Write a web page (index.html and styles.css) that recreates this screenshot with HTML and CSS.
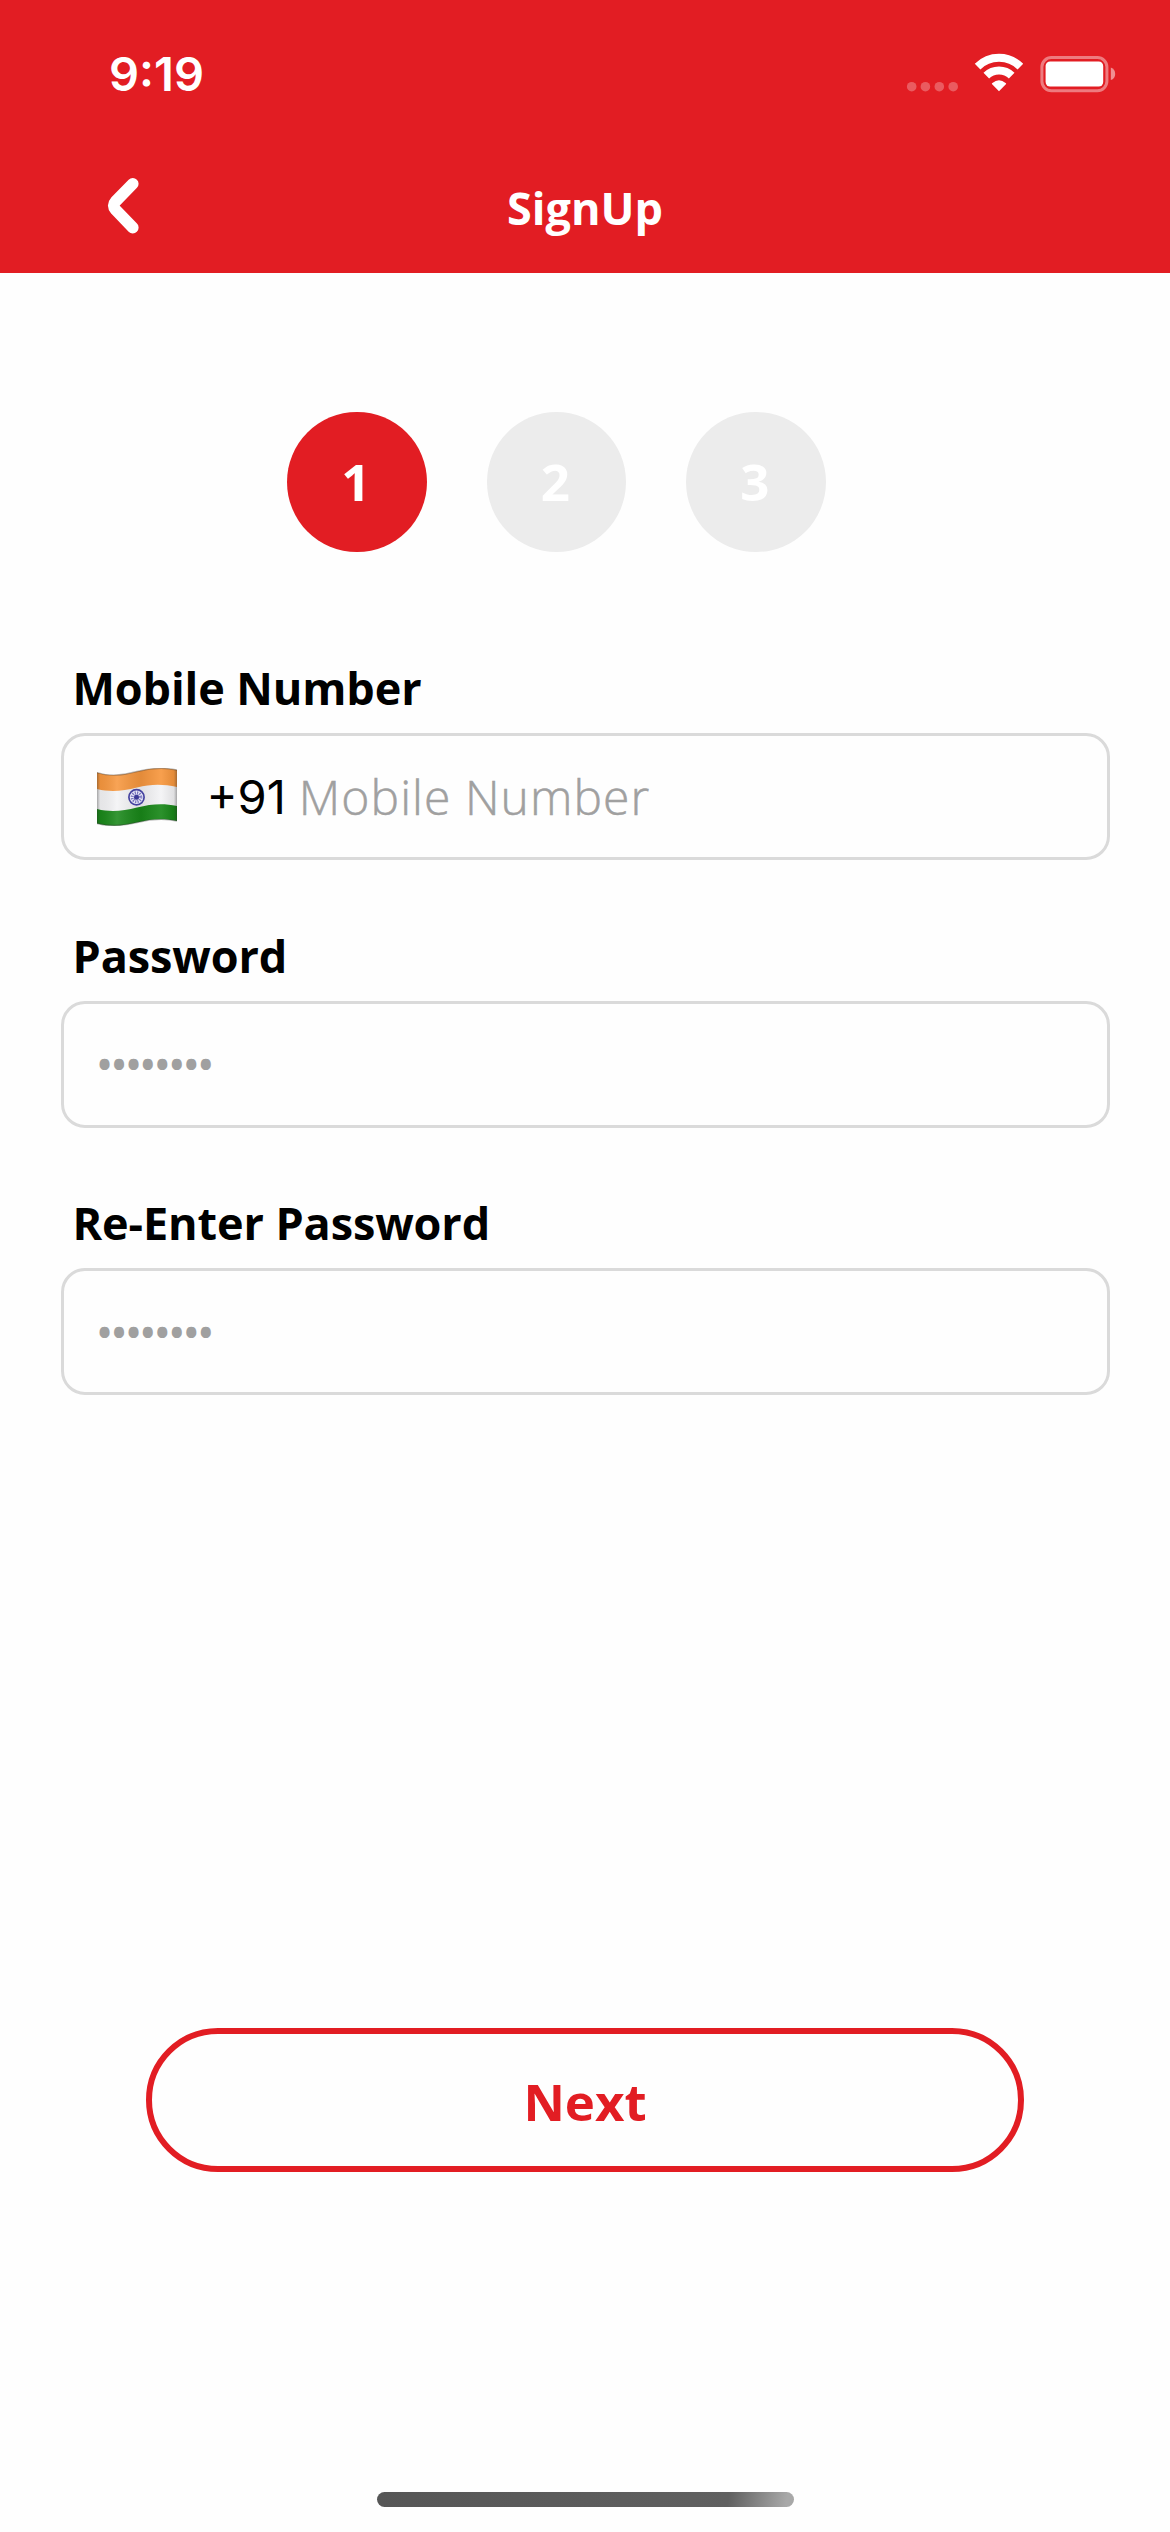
FILE: index.html
```html
<!DOCTYPE html>
<html lang="en">
<head>
<meta charset="utf-8">
<title>SignUp</title>
<link rel="stylesheet" href="styles.css">
</head>
<body>
<div class="screen">
  <header class="header">
    <div class="status">
      <span class="time">9:19</span>
      <svg class="status-icons" width="210" height="44" viewBox="906 52 210 44" aria-hidden="true">
        <g fill="#fff" fill-opacity=".28">
          <circle cx="911.7" cy="86.7" r="4.8"/><circle cx="925.4" cy="86.7" r="4.8"/>
          <circle cx="939.3" cy="86.7" r="4.8"/><circle cx="953.2" cy="86.7" r="4.8"/>
        </g>
        <g fill="none" stroke="#fff" stroke-width="8">
          <path d="M977.6 66.6A30.4 30.4 0 0 1 1020.4 66.6"/>
          <path d="M986.3 75.6A18.1 18.1 0 0 1 1011.7 75.6"/>
        </g>
        <path d="M999 91.3 991.9 84.1Q991.6 83.5 992.4 82.9Q999 77.7 1005.6 82.9Q1006.4 83.5 1006.1 84.1Z" fill="#fff"/>
        <rect x="1041.9" y="57.6" width="65" height="33.2" rx="9.5" fill="none" stroke="#fff" stroke-opacity=".42" stroke-width="3"/>
        <rect x="1045.6" y="61.5" width="57.6" height="25" rx="4.5" fill="#fff"/>
        <path d="M1110.8 67.6Q1115.2 69.3 1115.2 74T1110.8 80Z" fill="#fff" fill-opacity=".5"/>
      </svg>
    </div>
    <div class="navbar">
      <svg class="back" width="36" height="60" viewBox="105 176 36 60" aria-label="Back">
        <path d="M132.8 183.8 115.6 201.4Q111.8 205.6 115.6 209.8L132.8 227.6" fill="none" stroke="#fff" stroke-width="11.6" stroke-linecap="round" stroke-linejoin="round"/>
      </svg>
      <h1 class="title">SignUp</h1>
    </div>
  </header>

  <ol class="steps">
    <li class="step active">1</li>
    <li class="step">2</li>
    <li class="step">3</li>
  </ol>

  <main class="form">
    <section class="group">
      <label class="label">Mobile Number</label>
      <div class="field">
        <svg class="flag" width="80" height="58" viewBox="0 0 80 58" aria-label="India">
          <defs>
            <clipPath id="wave"><path d="M0 4.5C14 9 26 7 40 3.5S66-1 80 2V53C66 50 54 51 40 54.5S14 59 0 55.5Z"/></clipPath>
            <linearGradient id="shade">
              <stop offset="0" stop-color="#222" stop-opacity=".38"/>
              <stop offset=".04" stop-color="#444" stop-opacity=".08"/>
              <stop offset=".25" stop-color="#fff" stop-opacity=".14"/>
              <stop offset=".55" stop-color="#333" stop-opacity=".1"/>
              <stop offset=".8" stop-color="#fff" stop-opacity=".1"/>
              <stop offset=".96" stop-color="#333" stop-opacity=".1"/>
              <stop offset="1" stop-color="#222" stop-opacity=".38"/>
            </linearGradient>
          </defs>
          <g clip-path="url(#wave)">
            <path fill="#f3f3f5" d="M0 0H80V58H0Z"/>
            <path fill="#f7953a" d="M0 0H80V19C66 16 54 16 40 19.5S14 24.5 0 21Z"/>
            <path fill="#148514" d="M0 41C14 44.500 26 43 40 39.5S66 35 80 38V58H0Z"/>
            <path fill="url(#shade)" d="M0 0H80V58H0Z"/>
          </g>
          <path d="M0 4.5C14 9 26 7 40 3.5S66-1 80 2M0 55.5C14 59 26 58 40 54.5S66 50 80 53" fill="none" stroke="#333" stroke-opacity=".35" stroke-width="1.3"/>
          <circle cx="39.5" cy="29.2" r="7.6" fill="#e8e8f7" stroke="#4543a0" stroke-width="1.7"/>
          <circle cx="39.5" cy="29.2" r="4.2" fill="none" stroke="#7775bd" stroke-width="3.4" stroke-dasharray="1.1 1.1"/>
          <circle cx="39.5" cy="29.2" r="2.5" fill="#3b3996"/>
        </svg>
        <span class="code">+91</span>
        <span class="placeholder">Mobile Number</span>
      </div>
    </section>
    <section class="group">
      <label class="label">Password</label>
      <div class="field"><span class="mask">••••••••</span></div>
    </section>
    <section class="group">
      <label class="label">Re-Enter Password</label>
      <div class="field"><span class="mask">••••••••</span></div>
    </section>
  </main>

  <button class="next">Next</button>
  <div class="home-indicator"></div>
</div>
</body>
</html>
```
FILE: styles.css
```css
* {
  box-sizing: border-box;
}

body {
  margin: 0;
  background: #fefefe;
  font-family: "Open Sans", sans-serif;
  color: #000;
}

.screen {
  display: flex;
  flex-direction: column;
  align-items: center;
  width: 1170px;
  height: 2532px;
  overflow: hidden;
}

.header {
  flex: none;
  width: 100%;
  height: 273px;
  background: #e21d23;
  color: #fff;
}

.status {
  display: flex;
  align-items: center;
  justify-content: space-between;
  height: 148px;
  padding: 0 54px 0 109px;
}

.time {
  font: 600 47px/60px Inter, sans-serif;
}

.navbar {
  display: grid;
  grid-template-columns: 200px 1fr 200px;
  align-items: center;
  height: 120px;
}

.back {
  margin: 0 0 4px 105px;
}

.title {
  margin: 0;
  font-size: 45px;
  font-weight: 700;
  line-height: 60px;
  text-align: center;
}

.steps {
  display: flex;
  gap: 60px;
  align-self: flex-start;
  margin: 139px 0 0 287px;
  padding: 0;
  list-style: none;
}

.step {
  width: 139.5px;
  height: 140px;
  padding-right: 2px;
  border-radius: 50%;
  background: #ececec;
  color: #fff;
  font-size: 51px;
  font-weight: 700;
  line-height: 139px;
  text-align: center;
}

.active {
  background: #e21d23;
}

.form {
  display: flex;
  flex-direction: column;
  gap: 65.5px;
  width: 1049px;
  margin-top: 106px;
}

.group {
  display: flex;
  flex-direction: column;
  gap: 15px;
}

.label {
  padding-left: 12px;
  font-size: 45px;
  font-weight: 700;
  letter-spacing: -0.1px;
  line-height: 60px;
}

.field {
  display: flex;
  align-items: center;
  height: 127px;
  padding-left: 33px;
  border: 3px solid #dadada;
  border-radius: 24px;
}

.code {
  margin-left: 30px;
  font: 400 47px/60px Inter, sans-serif;
}

.placeholder {
  margin-left: 13px;
  color: #a0a0a0;
  font-size: 48px;
  font-weight: 300;
  letter-spacing: 1.05px;
  line-height: 60px;
  -webkit-text-stroke: 0.5px #a0a0a0;
}

.mask {
  color: #a0a0a0;
  font-size: 48px;
  letter-spacing: -3.6px;
  line-height: 60px;
  margin-left: -1px;
}

.next {
  width: 878px;
  height: 144px;
  margin-top: 633px;
  padding: 2px 0 0;
  border: 6px solid #e21d23;
  border-radius: 72px;
  background: transparent;
  color: #e21d23;
  font: 700 51px/60px "Open Sans", sans-serif;
}

.home-indicator {
  width: 417px;
  height: 15px;
  margin-top: 320px;
  border-radius: 8px;
  background: linear-gradient(100deg, #565656 0, #606060 84%, #a8a8a8 98%);
}
```
